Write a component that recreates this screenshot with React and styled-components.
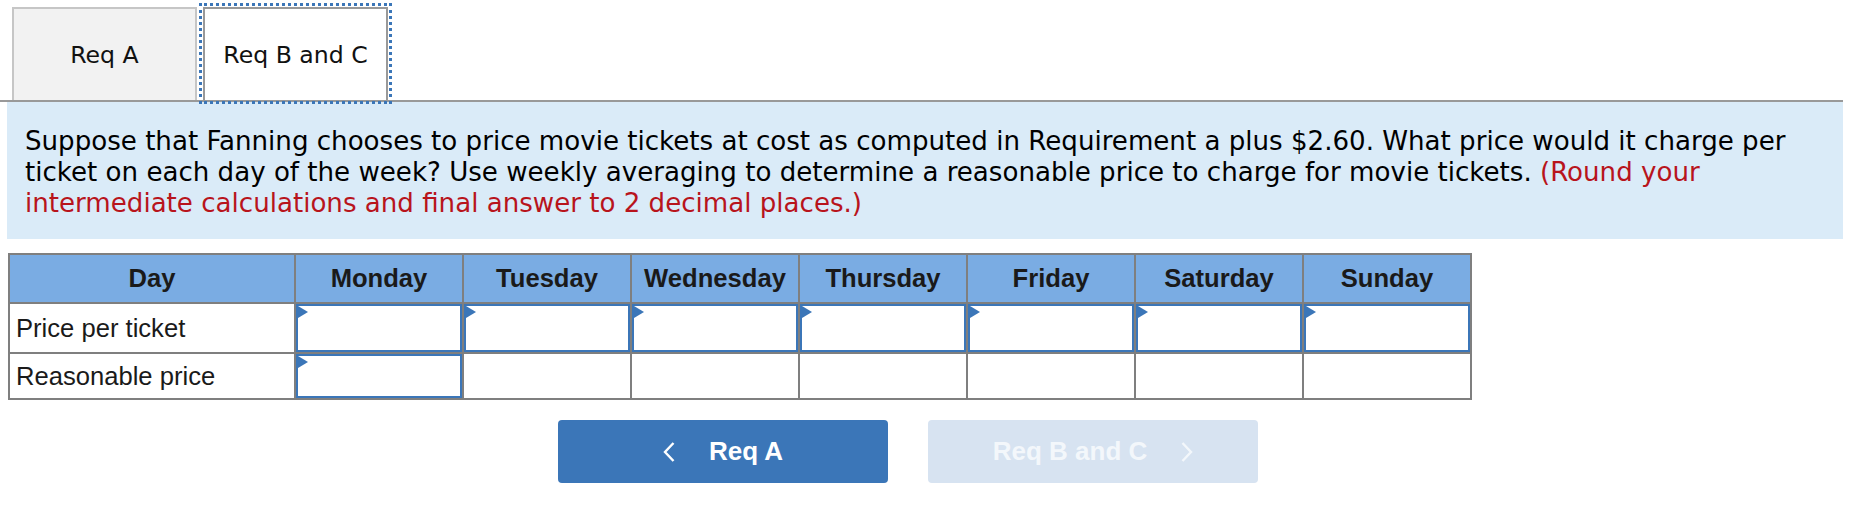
import React from "react";
import styled, { createGlobalStyle } from "styled-components";

const Global = createGlobalStyle`
  html, body { margin: 0; padding: 0; background: #fff; }
  body { font-family: "DejaVu Sans", Verdana, sans-serif; }
`;

const Page = styled.div`
  width: 1843px;
`;

const TabBar = styled.div`
  display: flex;
  align-items: flex-end;
  gap: 6px;
  padding: 7px 0 0 12px;
  border-bottom: 2px solid #999;
`;

const Tab = styled.button`
  box-sizing: border-box;
  width: 185px;
  height: 93px;
  margin: 0;
  padding: 0;
  font-family: "DejaVu Sans", Verdana, sans-serif;
  font-size: 23.6px;
  color: #111;
  cursor: pointer;
  border: 2px solid ${(p) => (p.$active ? "#999" : "#c6c6c6")};
  border-bottom: none;
  background: ${(p) => (p.$active ? "#fff" : "#f2f2f2")};
  outline: ${(p) => (p.$active ? "3px dotted #3b76b8" : "none")};
  outline-offset: 1px;
  position: relative;
  z-index: 1;
`;

const Panel = styled.div`
  margin: 0 0 0 7px;
  padding: 24px 18px 20px;
  background: #daebf8;
  font-size: 26.1px;
  line-height: 31px;
  color: #000;
`;

const Hint = styled.span`
  color: #b8141c;
`;

const Grid = styled.div`
  display: grid;
  grid-template-columns: 284px repeat(7, 166px);
  grid-template-rows: 47px 48px 44px;
  gap: 2px;
  padding: 2px;
  width: max-content;
  margin: 14px 0 0 8px;
  background: #7f7f7f;
  font-family: "Liberation Sans", Arial, sans-serif;
  font-size: 25.6px;
  color: #1a1a1a;
`;

const HeadCell = styled.div`
  background: #7aace3;
  font-weight: bold;
  display: flex;
  align-items: center;
  justify-content: center;
`;

const LabelCell = styled.div`
  background: #fff;
  display: flex;
  align-items: center;
  padding-left: 6px;
`;

const Cell = styled.div`
  background: #fff;
  position: relative;
`;

const AmountInput = styled.input`
  box-sizing: border-box;
  display: block;
  width: 100%;
  height: 100%;
  margin: 0;
  border: 2px solid #3b76b8;
  background: #fff;
  font-family: "Liberation Sans", Arial, sans-serif;
  font-size: 24px;
  text-align: right;
  padding: 0 8px;
  outline: none;
`;

const Flag = styled.span`
  position: absolute;
  left: 2px;
  top: 2px;
  width: 0;
  height: 0;
  border-top: 6.5px solid transparent;
  border-bottom: 6.5px solid transparent;
  border-left: 10px solid #3b76b8;
  pointer-events: none;
`;

const NavRow = styled.div`
  display: flex;
  gap: 40px;
  padding: 20px 0 0 558px;
`;

const NavButton = styled.button`
  box-sizing: border-box;
  width: 330px;
  height: 63px;
  border: none;
  border-radius: 4px;
  background: ${(p) => (p.disabled ? "#d7e3f1" : "#3b76b8")};
  color: ${(p) => (p.disabled ? "#f3f7fb" : "#fff")};
  display: flex;
  align-items: center;
  justify-content: center;
  gap: 34px;
  padding: 0;
  cursor: ${(p) => (p.disabled ? "default" : "pointer")};
  font-family: "Liberation Sans", Arial, sans-serif;
  font-weight: bold;
  font-size: 26px;
`;

const Chevron = ({ dir }) => (
  <svg width="12" height="20" viewBox="0 0 12 20" aria-hidden="true">
    <polyline
      points={dir === "left" ? "10.5,1 2,10 10.5,19" : "1.5,1 10,10 1.5,19"}
      fill="none"
      stroke="currentColor"
      strokeWidth="2.4"
    />
  </svg>
);

const days = ["Monday", "Tuesday", "Wednesday", "Thursday", "Friday", "Saturday", "Sunday"];

const InputCell = () => (
  <Cell>
    <AmountInput type="text" />
    <Flag />
  </Cell>
);

export default function App() {
  return (
    <Page>
      <Global />
      <TabBar>
        <Tab>Req A</Tab>
        <Tab $active>Req B and C</Tab>
      </TabBar>
      <Panel>
        Suppose that Fanning chooses to price movie tickets at cost as computed in Requirement a plus
        $2.60. What price would it charge per ticket on each day of the week? Use weekly averaging to
        determine a reasonable price to charge for movie tickets.{" "}
        <Hint>(Round your intermediate calculations and final answer to 2 decimal places.)</Hint>
      </Panel>
      <Grid>
        <HeadCell>Day</HeadCell>
        {days.map((d) => (
          <HeadCell key={d}>{d}</HeadCell>
        ))}
        <LabelCell>Price per ticket</LabelCell>
        {days.map((d) => (
          <InputCell key={"p" + d} />
        ))}
        <LabelCell>Reasonable price</LabelCell>
        <InputCell />
        {days.slice(1).map((d) => (
          <Cell key={"r" + d} />
        ))}
      </Grid>
      <NavRow>
        <NavButton>
          <Chevron dir="left" />
          <span>Req A</span>
        </NavButton>
        <NavButton disabled>
          <span>Req B and C</span>
          <Chevron dir="right" />
        </NavButton>
      </NavRow>
    </Page>
  );
}
